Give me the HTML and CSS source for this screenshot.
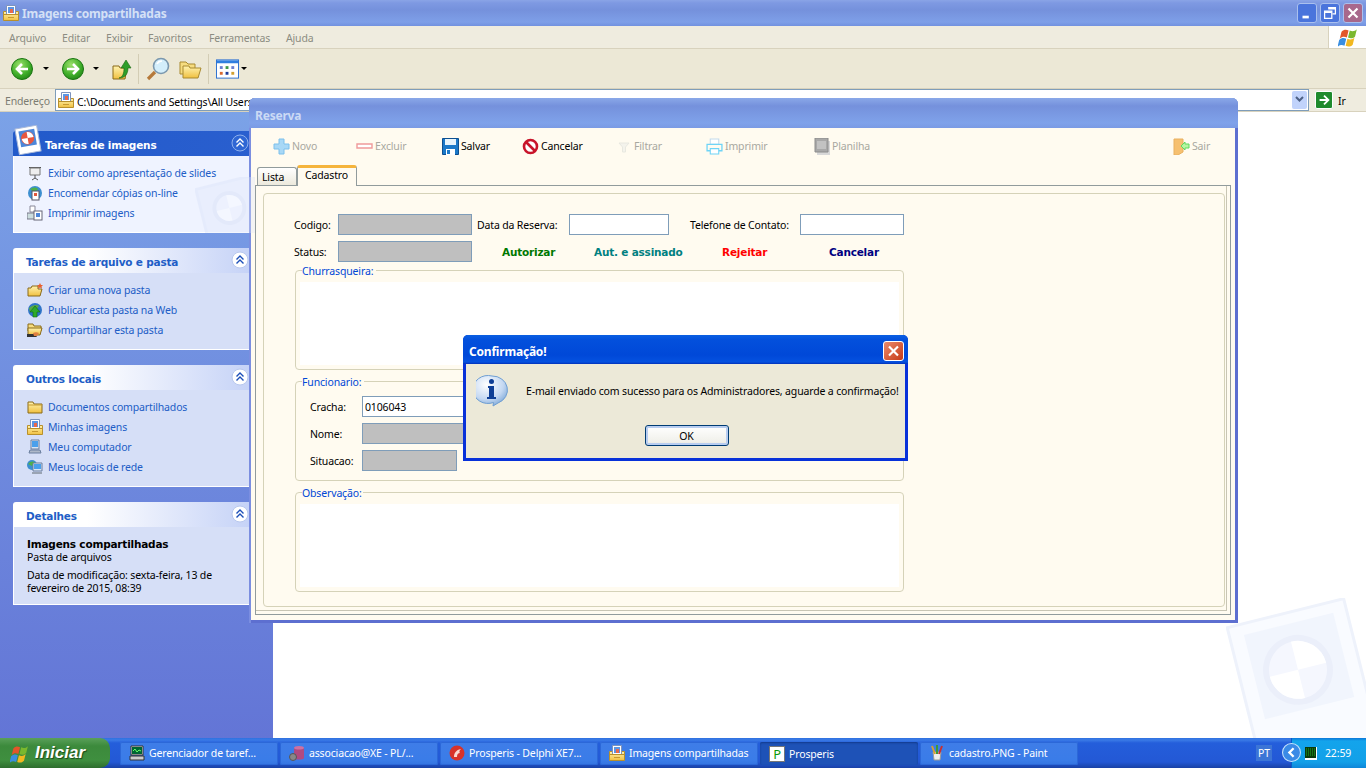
FILE: index.html
```html
<!DOCTYPE html>
<html lang="pt">
<head>
<meta charset="utf-8">
<title>Imagens compartilhadas</title>
<link rel="stylesheet" href="styles.css">
</head>
<body>
<svg class="defs" width="0" height="0">
  <defs>
    <linearGradient id="gFolder" x1="0" y1="0" x2="0" y2="1"><stop offset="0" stop-color="#fff3b0"/><stop offset="1" stop-color="#f0c040"/></linearGradient>
    <radialGradient id="gGreen" cx=".4" cy=".3" r=".8"><stop offset="0" stop-color="#9be06a"/><stop offset=".6" stop-color="#3fae2a"/><stop offset="1" stop-color="#1c7c14"/></radialGradient>
    <radialGradient id="gBall" cx=".4" cy=".3" r=".8"><stop offset="0" stop-color="#ffffff"/><stop offset=".6" stop-color="#c4d8f2"/><stop offset="1" stop-color="#6f9ed2"/></radialGradient>
    <symbol id="i-picfolder" viewBox="0 0 16 16">
      <path d="M.5 6.500h15v9H.5z" fill="url(#gFolder)" stroke="#b8902c"/>
      <path d="M3.500 .5h9v9h-9z" fill="#fff" stroke="#7d93bd"/>
      <path d="M5 2h6v6H5z" fill="#5c96e4"/>
      <path d="M7 4h3v4H7z" fill="#e8694c"/>
      <path d="M1 9.500h14" stroke="#b8902c" fill="none"/>
      <path d="M5 12.500h6" stroke="#c89a30" fill="none"/>
    </symbol>
    <symbol id="i-back" viewBox="0 0 22 22">
      <circle cx="11" cy="11" r="10.500" fill="url(#gGreen)" stroke="#1a7512"/>
      <path d="M17 11H7M11 6l-5 5 5 5" fill="none" stroke="#fff" stroke-width="2.600"/>
    </symbol>
    <symbol id="i-forward" viewBox="0 0 22 22">
      <circle cx="11" cy="11" r="10.500" fill="url(#gGreen)" stroke="#1a7512"/>
      <path d="M5 11h10M11 6l5 5-5 5" fill="none" stroke="#fff" stroke-width="2.600"/>
    </symbol>
    <symbol id="i-up" viewBox="0 0 20 22">
      <path d="M1 8h6l1 2h7l-2 11H1z" fill="url(#gFolder)" stroke="#8a6a18"/>
      <path d="M7 20c4-1 5-5 5-10H9l5-8 5 8h-3c0 6-3 10-9 10z" fill="#2e9e2a" stroke="#17660f" stroke-width=".6"/>
    </symbol>
    <symbol id="i-search" viewBox="0 0 24 24">
      <path d="M9 15l-7 7" stroke="#b5793a" stroke-width="3.200" fill="none"/>
      <circle cx="15" cy="9" r="7.500" fill="#d3eefb" stroke="#7b98ae" stroke-width="1.600"/>
      <path d="M11 7c1-2 3-3 5-3" stroke="#fff" stroke-width="1.600" fill="none"/>
    </symbol>
    <symbol id="i-folders" viewBox="0 0 23 20">
      <path d="M1 3h6l2 2h7v10H1z" fill="#f6dc80" stroke="#a98a30"/>
      <path d="M4 7h6l1 2h11l-3 10H4z" fill="url(#gFolder)" stroke="#a98a30"/>
    </symbol>
    <symbol id="i-views" viewBox="0 0 24 20">
      <rect x=".5" y=".5" width="23" height="19" fill="#fff" stroke="#2a6fd0"/>
      <rect x="1" y="1" width="22" height="3" fill="#2f7fe0"/>
      <path d="M4 7h3v3H4z" fill="#6a7fd0"/><path d="M10 7h3v3h-3z" fill="#3f9a4a"/><path d="M16 7h3v3h-3z" fill="#6a7fd0"/>
      <path d="M4 13h3v3H4z" fill="#d86a30"/><path d="M10 13h3v3h-3z" fill="#1c3c9a"/><path d="M16 13h3v3h-3z" fill="#d0a030"/>
    </symbol>
    <symbol id="i-chev" viewBox="0 0 18 18">
      <circle cx="9" cy="9" r="8" fill="#fff" stroke="#b8c8ee"/>
      <path d="M5.500 8.500L9 5l3.500 3.500M5.500 12.500L9 9l3.500 3.500" fill="none" stroke="#1c4fb8" stroke-width="1.400"/>
    </symbol>
    <symbol id="i-chev-dark" viewBox="0 0 18 18">
      <circle cx="9" cy="9" r="8" fill="#2f66d4" stroke="#8fb0ec"/>
      <path d="M5.500 8.500L9 5l3.500 3.500M5.500 12.500L9 9l3.500 3.500" fill="none" stroke="#fff" stroke-width="1.400"/>
    </symbol>
    <symbol id="i-flag" viewBox="0 2 17 17">
      <path d="M3 6c2-2 4-2 6-1l-1.500 6c-2-1-4-1-6 1z" fill="#e2552a"/>
      <path d="M10 5c2 1 4 1 6-1l-1.500 6c-2 2-4 2-6 1z" fill="#7ab82e"/>
      <path d="M1 13c2-2 4-2 6-1l-1.500 6c-2-1-4-1-6 1z" fill="#3a8ee0"/>
      <path d="M8 12c2 1 4 1 6-1l-1.500 6c-2 2-4 2-6 1z" fill="#f2b820"/>
    </symbol>
    <symbol id="i-print" viewBox="0 0 16 16">
      <path d="M4 1h8v5H4z" fill="#fff" stroke="#c4dcec"/>
      <path d="M1 6h14v6H1z" fill="#fffbf0" stroke="#6fd4f6" stroke-width="1.200"/>
      <path d="M4 10h8v5H4z" fill="#fff" stroke="#6fd4f6"/>
    </symbol>
    <symbol id="i-watermark" viewBox="0 0 140 140">
      <g transform="rotate(-14 0 29)">
        <rect x="1" y="30" width="120" height="150" fill="#f9fbff" stroke="#eef2fb" stroke-width="3"/>
        <rect x="15.500" y="41" width="92" height="87" fill="#f1f5fd"/>
        <circle cx="59.500" cy="88" r="35" fill="#ebeffa"/>
        <circle cx="59.500" cy="88" r="29" fill="#f5f7fe"/>
        <path d="M59.500 59a29 29 0 0 1 29 29h-29zM59.500 88h-29a29 29 0 0 0 29 29z" fill="#fff"/>
      </g>
    </symbol>
  </defs>
</svg>

<div class="desktop">
  <!-- Explorer window -->
  <div class="explorer">
    <div class="titlebar">
      <svg class="ic16"><use href="#i-picfolder"/></svg>
      <span class="title-text">Imagens compartilhadas</span>
      <div class="caption-btns">
        <span class="capbtn"><svg viewBox="0 0 20 20"><path d="M5 13h7v3H5z" fill="#fff"/></svg></span>
        <span class="capbtn"><svg viewBox="0 0 20 20"><path d="M8 4h8v7h-3M4 8h8v8H4z" fill="none" stroke="#fff" stroke-width="1.400"/><path d="M8 4h8v2H8zM4 8h8v2H4z" fill="#fff"/></svg></span>
        <span class="capbtn capbtn-close"><svg viewBox="0 0 20 20"><path d="M5 5l10 10M15 5L5 15" stroke="#fff" stroke-width="2.400"/></svg></span>
      </div>
    </div>
    <div class="menubar">
      <ul class="menu">
        <li>Arquivo</li><li>Editar</li><li>Exibir</li><li>Favoritos</li><li>Ferramentas</li><li>Ajuda</li>
      </ul>
      <div class="menu-logo"><svg class="ic-flag"><use href="#i-flag"/></svg></div>
    </div>
    <div class="toolbar">
      <svg class="ic22"><use href="#i-back"/></svg>
      <span class="caret"></span>
      <svg class="ic22"><use href="#i-forward"/></svg>
      <span class="caret"></span>
      <svg class="ic-up"><use href="#i-up"/></svg>
      <span class="tsep"></span>
      <svg class="ic-search"><use href="#i-search"/></svg>
      <svg class="ic-folders"><use href="#i-folders"/></svg>
      <span class="tsep"></span>
      <svg class="ic-views"><use href="#i-views"/></svg>
      <span class="caret"></span>
    </div>
    <div class="addressbar">
      <span class="addr-label">Endereço</span>
      <div class="addr-box">
        <svg class="ic16"><use href="#i-picfolder"/></svg>
        <span class="addr-text">C:\Documents and Settings\All Users\Documentos\Imagens</span>
        <span class="addr-drop"><svg viewBox="0 0 15 17"><path d="M4 6l3.500 3.500L11 6" fill="none" stroke="#4d6185" stroke-width="2"/></svg></span>
      </div>
      <span class="go-btn"><svg viewBox="0 0 18 18"><path d="M4 9h9M9 4l5 5-5 5" fill="none" stroke="#fff" stroke-width="2"/></svg></span>
      <span class="go-text">Ir</span>
    </div>
    <div class="content">
      <aside class="sidebar">
        <section class="panel panel-primary">
          <svg class="panel-logo" viewBox="0 0 28 31"><g transform="rotate(-10 14 15)"><rect x="3" y="2" width="22" height="26" fill="#fff" stroke="#a8b8d8"/><rect x="6" y="5" width="16" height="16" fill="#4d86d8"/><circle cx="14" cy="13" r="6.500" fill="#e8573f"/><path d="M14 7a6 6 0 0 1 6 6h-6zM14 13H8a6 6 0 0 0 6 6z" fill="#fff"/></g></svg>
          <svg class="panel-watermark" viewBox="0 0 60 56"><g transform="rotate(-14 30 30)"><rect x="6" y="6" width="60" height="66" fill="#dfe7fb" stroke="#d5dff7" stroke-width="3"/><circle cx="34" cy="32" r="17" fill="#cfd9f3"/><circle cx="34" cy="32" r="13" fill="#eaf0fd"/><path d="M34 19a13 13 0 0 1 13 13H34zM34 32H21a13 13 0 0 0 13 13z" fill="#fff"/></g></svg>
          <header class="panel-head"><h2>Tarefas de imagens</h2><svg class="chev"><use href="#i-chev-dark"/></svg></header>
          <div class="panel-body">
            <a class="task"><svg class="ic16" viewBox="0 0 16 16"><path d="M2 2h12v1H2z" fill="#555"/><path d="M3 3h10v7H3z" fill="#eee" stroke="#777"/><path d="M8 10v3M5 15l3-2 3 2" stroke="#555" fill="none"/></svg><span>Exibir como apresentação de slides</span></a>
            <a class="task"><svg class="ic16" viewBox="0 0 16 16"><circle cx="8" cy="8" r="7" fill="#3c8fd0"/><path d="M3 4c3-2 6-2 8 0L8 8z" fill="#4fb04a"/><rect x="5" y="6" width="7" height="9" fill="#fff" stroke="#556"/><rect x="7" y="8" width="3" height="3" fill="#e2563c"/></svg><span>Encomendar cópias on-line</span></a>
            <a class="task"><svg class="ic16" viewBox="0 0 16 16"><path d="M3 1h5v6H3z" fill="#fff" stroke="#889"/><path d="M0 8h9v6H0z" fill="#cdd" stroke="#778"/><rect x="7" y="6" width="8" height="9" fill="#fff" stroke="#667"/><rect x="9" y="8" width="4" height="4" fill="#4d86d8"/></svg><span>Imprimir imagens</span></a>
          </div>
        </section>
        <section class="panel">
          <header class="panel-head"><h2>Tarefas de arquivo e pasta</h2><svg class="chev"><use href="#i-chev"/></svg></header>
          <div class="panel-body">
            <a class="task"><svg class="ic16" viewBox="0 0 16 16"><path d="M1 6h3l1-2h6v3h4l-2 7H1z" fill="url(#gFolder)" stroke="#8a6a18"/><path d="M13 1l1 2 2 0-1.500 1.500.5 2-2-1-2 1 .5-2L10 3l2 0z" fill="#e8602c"/></svg><span>Criar uma nova pasta</span></a>
            <a class="task"><svg class="ic16" viewBox="0 0 16 16"><circle cx="8" cy="8" r="7" fill="#2f74c8"/><path d="M2 6c3-3 8-4 10-2l-3 4-6 2z" fill="#57a848"/><path d="M8 4l5 6h-3v5H6v-5H3z" fill="#2eaa2a" stroke="#0e6a10" stroke-width=".6"/></svg><span>Publicar esta pasta na Web</span></a>
            <a class="task"><svg class="ic16" viewBox="0 0 16 16"><path d="M1 2h5l1 2h7v5H1z" fill="#f6dc80" stroke="#8a6a18"/><path d="M1 6h14l-2 7H1z" fill="url(#gFolder)" stroke="#8a6a18"/><path d="M0 12h8l2 3H0z" fill="#333"/><path d="M6 11c2-1 4-1 6 0l-2 3H7z" fill="#e08040"/></svg><span>Compartilhar esta pasta</span></a>
          </div>
        </section>
        <section class="panel">
          <header class="panel-head"><h2>Outros locais</h2><svg class="chev"><use href="#i-chev"/></svg></header>
          <div class="panel-body">
            <a class="task"><svg class="ic16" viewBox="0 0 16 16"><path d="M1 3h5l1 2h8v9H1z" fill="url(#gFolder)" stroke="#8a6a18"/><path d="M1 6h14" stroke="#c49a30"/></svg><span>Documentos compartilhados</span></a>
            <a class="task"><svg class="ic16"><use href="#i-picfolder"/></svg><span>Minhas imagens</span></a>
            <a class="task"><svg class="ic16" viewBox="0 0 16 16"><path d="M4 1h8v9H4z" fill="#d8e4f4" stroke="#6a7f9f"/><path d="M5 2h6v6H5z" fill="#4aa0ec"/><path d="M3 11h10l1 3H2z" fill="#aeb8c8" stroke="#6a7f9f"/></svg><span>Meu computador</span></a>
            <a class="task"><svg class="ic16" viewBox="0 0 16 16"><circle cx="5" cy="6" r="5" fill="#3c8fd0"/><path d="M1 5c2-3 5-3 7-2L5 7z" fill="#4fb04a"/><path d="M6 4h9v8H6z" fill="#d8e4f4" stroke="#6a7f9f"/><path d="M7 5h7v5H7z" fill="#4aa0ec"/><path d="M5 13h10v2H5z" fill="#9aa4b4"/></svg><span>Meus locais de rede</span></a>
          </div>
        </section>
        <section class="panel">
          <header class="panel-head"><h2>Detalhes</h2><svg class="chev"><use href="#i-chev"/></svg></header>
          <div class="panel-body details">
            <strong>Imagens compartilhadas</strong>
            <span>Pasta de arquivos</span>
            <p>Data de modificação: sexta-feira, 13 de<br>fevereiro de 2015, 08:39</p>
          </div>
        </section>
      </aside>
      <main class="listing"><svg class="main-watermark"><use href="#i-watermark"/></svg></main>
    </div>
  </div>

  <!-- Reserva window -->
  <div class="reserva">
    <div class="res-title"><span>Reserva</span></div>
    <div class="res-client">
      <div class="res-tools">
        <span class="tool off"><svg class="ic17" viewBox="0 0 17 17"><path d="M6 1h5v5h5v5h-5v5H6v-5H1V6h5z" fill="#a8d8f6" stroke="#7cc0ec"/></svg>Novo</span>
        <span class="tool off"><svg class="ic17" viewBox="0 0 17 17"><path d="M1 6h15v4H1z" fill="#fff" stroke="#f09a9a" stroke-width="1.400"/></svg>Excluir</span>
        <span class="tool"><svg class="ic17" viewBox="0 0 17 17"><path d="M.5.5h16v16H.5z" fill="#1b78c8" stroke="#0d4f90"/><path d="M3 1h11v6H3z" fill="#e8f4fc"/><path d="M4 11h9v6H4z" fill="#fff"/><path d="M5 12h3v4H5z" fill="#1b78c8"/></svg>Salvar</span>
        <span class="tool"><svg class="ic17" viewBox="0 0 17 17"><circle cx="8.500" cy="8.500" r="6.500" fill="#fff" stroke="#c8142a" stroke-width="2.600"/><path d="M4 4l9 9" stroke="#c8142a" stroke-width="2.600"/></svg>Cancelar</span>
        <span class="tool off tool-filter"><svg class="ic12" viewBox="0 0 12 12"><path d="M1 2h10L7.500 6v5h-3V6z" fill="#f4f3ec" stroke="#e8e8e0"/></svg>Filtrar</span>
        <span class="tool off"><svg class="ic17"><use href="#i-print"/></svg>Imprimir</span>
        <span class="tool off tool-sheet"><svg class="ic17" viewBox="0 0 17 17"><path d="M3 3h13v14H3z" fill="#d8d8d8"/><path d="M1 0h13v14H1z" fill="#a8a8a8" stroke="#8c8c8c"/><path d="M3 4h9M3 6h9M3 8h9M3 10h9" stroke="#dcdcdc"/></svg>Planilha</span>
        <span class="tool off"><svg class="ic17" viewBox="0 0 17 17"><path d="M1 1h9v13l-5 3H1z" fill="#f6c070" stroke="#e8b060"/><path d="M8 8l4-4v2h4v4h-4v2z" fill="#b6f6a0" stroke="#60d860"/></svg>Sair</span>
      </div>
      <div class="tabs">
        <span class="tab">Lista</span>
        <span class="tab tab-active">Cadastro</span>
      </div>
      <div class="tab-page">
        <div class="bevel">
          <div class="form-row">
            <label class="lbl-code">Codigo:</label><span class="field ro w-code"></span>
            <label class="lbl-date">Data da Reserva:</label><span class="field w-date"></span>
            <label class="lbl-phone">Telefone de Contato:</label><span class="field w-phone"></span>
          </div>
          <div class="form-row">
            <label class="lbl-code">Status:</label><span class="field ro w-code"></span>
            <b class="action act-auth">Autorizar</b>
            <b class="action act-signed">Aut. e assinado</b>
            <b class="action act-reject">Rejeitar</b>
            <b class="action act-cancel">Cancelar</b>
          </div>
          <div class="group group-first"><span class="legend">Churrasqueira:</span><div class="group-fill"></div></div>
          <div class="group group-staff">
            <span class="legend">Funcionario:</span>
            <div class="staff-row"><label>Cracha:</label><span class="field field-value w-staff">0106043</span></div>
            <div class="staff-row"><label>Nome:</label><span class="field ro w-staff"></span></div>
            <div class="staff-row"><label>Situacao:</label><span class="field ro w-state"></span></div>
          </div>
          <div class="group"><span class="legend legend-tight">Observação:</span><div class="group-fill"></div></div>
        </div>
      </div>
    </div>
  </div>

  <!-- Dialog -->
  <div class="dialog">
    <div class="dlg-title">
      <span class="dlg-caption">Confirmação!</span>
      <span class="dlg-close"><svg viewBox="0 0 21 20"><path d="M5.500 5l10 10M15.500 5l-10 10" stroke="#fff" stroke-width="2.400"/></svg></span>
    </div>
    <div class="dlg-body">
      <div class="dlg-msg">
        <svg class="ic-info" viewBox="0 0 32 33"><path d="M16 1a15 14 0 0 1 6 27l-5 3 .5-3.500A15 14 0 1 1 16 1z" fill="url(#gBall)" stroke="#6f9ed2"/><circle cx="15.500" cy="6.500" r="2.500" fill="#0f3f96"/><path d="M12 11h6v11h2v2h-9v-2h2v-9h-1z" fill="#0f3f96"/></svg>
        <p>E-mail enviado com sucesso para os Administradores, aguarde a confirmação!</p>
      </div>
      <div class="dlg-actions"><button class="ok" type="button">OK</button></div>
    </div>
  </div>

  <!-- Taskbar -->
  <footer class="taskbar">
    <div class="start"><svg class="ic-start"><use href="#i-flag"/></svg><span>Iniciar</span></div>
    <div class="tasks">
      <div class="task-btn"><svg class="ic16" viewBox="0 0 16 16"><path d="M2 1h12v9H2z" fill="#ddd" stroke="#333"/><path d="M3 2h10v7H3z" fill="#063"/><path d="M4 6l2-2 2 3 2-2 2 1" stroke="#6f6" fill="none"/><path d="M1 11h14v4H1z" fill="#ccc" stroke="#333"/></svg><span>Gerenciador de taref...</span></div>
      <div class="task-btn"><svg class="ic16" viewBox="0 0 16 16"><ellipse cx="10" cy="3" rx="5" ry="2" fill="#d070a0"/><path d="M5 3v10c0 2 10 2 10 0V3c0 2-10 2-10 0z" fill="#b04a80"/><circle cx="4" cy="12" r="3.500" fill="#888" stroke="#555"/></svg><span>associacao@XE - PL/...</span></div>
      <div class="task-btn"><svg class="ic16" viewBox="0 0 16 16"><circle cx="8" cy="8" r="7.500" fill="#d8322a"/><path d="M5 12c0-4 2-7 7-8-2 2-2 3-1 4-2 0-3 1-3 4z" fill="#fbd8d0"/></svg><span>Prosperis - Delphi XE7...</span></div>
      <div class="task-btn"><svg class="ic16"><use href="#i-picfolder"/></svg><span>Imagens compartilhadas</span></div>
      <div class="task-btn task-current"><span class="p-logo">P</span><span>Prosperis</span></div>
      <div class="task-btn"><svg class="ic16" viewBox="0 0 16 16"><path d="M4 7h8l-1 8H5z" fill="#eee" stroke="#999"/><path d="M3 1l3 8" stroke="#d8a030" stroke-width="2"/><path d="M8 0v9" stroke="#3a9a3a" stroke-width="2"/><path d="M13 1l-3 8" stroke="#c83030" stroke-width="2"/></svg><span>cadastro.PNG - Paint</span></div>
    </div>
    <span class="lang">PT</span>
    <span class="tray-arrow"><svg viewBox="0 0 18 18"><circle cx="9" cy="9" r="8.500" fill="#3a8ae6" stroke="#c8e4fc"/><path d="M11 5L7 9l4 4" fill="none" stroke="#fff" stroke-width="2.200"/></svg></span>
    <div class="tray">
      <svg class="ic-mon" viewBox="0 0 12 13"><path d="M0 0h12v13H0z" fill="#fff"/><path d="M0 0h11v11H0z" fill="#0a3a0a"/><path d="M1 2h9M1 4h9M1 6h9M1 8h9" stroke="#23b023" stroke-dasharray="1 1"/></svg>
      <span class="clock">22:59</span>
    </div>
  </footer>
</div>
</body>
</html>
```

FILE: styles.css
```css
* { box-sizing: border-box; }
html, body { margin: 0; padding: 0; width: 1366px; height: 768px; overflow: hidden; }
body { font: 10.5px/13px "Noto Sans", Tahoma, sans-serif; letter-spacing: -.15px; color: #000; background: #fff; }
.defs { position: absolute; }
svg { display: block; flex: none; }
h2, p, ul { margin: 0; padding: 0; }

.ic16 { width: 16px; height: 16px; }
.ic17 { width: 17px; height: 17px; }
.ic12 { width: 12px; height: 12px; }
.ic22 { width: 22px; height: 22px; }

.desktop { position: relative; width: 1366px; height: 768px; overflow: hidden; display: flex; flex-direction: column; }

/* Explorer */
.explorer { height: 738px; display: flex; flex-direction: column; }
.titlebar {
  height: 26px; display: flex; align-items: center; padding: 0 3px 0 3px; gap: 3px;
  background: linear-gradient(180deg, #8aa4e6 0, #7e99e2 3px, #7591dc 10px, #7e9fe8 22px, #7291df 26px);
}
.title-text { font: bold 12px/14px "Noto Sans", sans-serif; letter-spacing: -.2px; color: #d4e0f6; padding-top: 1px; }
.caption-btns { margin-left: auto; display: flex; gap: 3px; }
.capbtn { width: 20px; height: 20px; border: 1px solid #aac0ee; border-radius: 3px; background: #4a74dc; }
.capbtn svg { width: 18px; height: 18px; }
.capbtn-close { background: #a8688c; }
.menubar { height: 23px; display: flex; background: #efecdf; border-bottom: 1px solid #d8d2bd; }
.menu { list-style: none; display: grid; grid-template-columns: 53px 44px 42px 61px 77px auto; padding: 2px 0 0 9px; align-items: center; color: #8c8c82; height: 22px; }
.menu-logo { margin-left: auto; width: 38px; background: #fff; border-left: 1px solid #d8d2bd; display: flex; align-items: center; justify-content: center; }
.ic-flag { width: 20px; height: 20px; }
.toolbar {
  height: 40px; display: grid; grid-template-columns: 32px 19px 31px 19px 26px 8px 33px 29px 8px 25px auto;
  align-items: center; padding-left: 11px; background: #ece8d6; border-bottom: 1px solid #d8d2bd;
}
.caret { width: 0; height: 0; border: 3px solid transparent; border-top: 3px solid #000; border-bottom: 0; }
.tsep { width: 1px; height: 30px; background: #d3cdb5; }
.ic-up { width: 20px; height: 22px; }
.ic-search { width: 24px; height: 24px; }
.ic-folders { width: 23px; height: 20px; }
.ic-views { width: 23px; height: 20px; }
.addressbar { height: 23px; display: flex; align-items: center; background: #efecdf; border-bottom: 1px solid #d8d2bd; }
.addr-label { width: 55px; padding: 2px 0 0 5px; color: #7c7c72; }
.addr-box { width: 1254px; height: 22px; display: flex; align-items: center; background: #fff; border: 1px solid #7f9db9; padding: 0 1px 0 2px; gap: 3px; }
.addr-text { white-space: nowrap; padding-top: 5px; }
.addr-drop { margin-left: auto; width: 15px; height: 18px; background: #c1d3fb; border-radius: 2px; }
.go-btn { margin-left: 6px; width: 18px; height: 18px; border-radius: 2px; background: #1f8a2c; border: 1px solid #fff; }
.go-text { margin-left: 5px; padding-top: 2px; }
.content { flex: 1; display: flex; min-height: 0; position: relative; }
.sidebar { width: 273px; padding: 19px 12px 0 13px; background: linear-gradient(180deg, #7ba2e7, #6375d6); overflow: hidden; flex: none; }
.panel { position: relative; width: 248px; margin-bottom: 15px; }
.panel-head {
  height: 25px; display: flex; align-items: center; justify-content: space-between; padding: 0 4px 0 13px; border-radius: 3px 3px 0 0;
  background: linear-gradient(90deg, #fff 30%, #c6d3f7 95%);
}
.panel-head h2 { font: bold 10.5px/13px "DejaVu Sans", sans-serif; letter-spacing: -.2px; color: #215dc6; padding-top: 3px; }
.chev { width: 18px; height: 18px; margin: 0 8px 2px 0; }
.panel-body { padding: 7px 0 9px 13px; background: #d6dff7; border: 1px solid #fff; border-width: 0 0 1px 1px; }
.task { display: flex; align-items: center; height: 20px; gap: 5px; color: #215dc6; }
.panel-primary .panel-head { padding-left: 32px; background: linear-gradient(90deg, #225aca, #2a5fcf); }
.panel-primary .panel-head h2 { color: #fff; }
.panel-primary .panel-body { background: #eff3ff; }
.panel-logo { position: absolute; left: 1px; top: -6px; width: 28px; height: 31px; z-index: 1; }
.panel-watermark { position: absolute; left: 182px; top: 46px; width: 60px; height: 56px; z-index: 1; opacity: .35; overflow: hidden; }
.details { padding: 11px 10px 9px 13px; color: #000; display: flex; flex-direction: column; }
.details strong { font: bold 10.5px/13px "DejaVu Sans", sans-serif; letter-spacing: -.2px; }
.details p { margin-top: 5px; }
.listing { flex: 1; position: relative; background: #fff; }
.main-watermark { position: absolute; right: 0; bottom: 0; width: 140px; height: 140px; }

/* Reserva window */
.reserva {
  position: absolute; left: 249px; top: 98px; width: 989px; height: 525px; display: flex; flex-direction: column;
  background: #5d6fd0; border-radius: 6px 6px 0 0; box-shadow: inset 0 1px 0 #86a6dd, inset 2px 0 0 #7b8ee0;
}
.res-title {
  height: 30px; padding: 10px 6px 0; border-radius: 6px 6px 0 0; flex: none;
  font: bold 12px/15px "Noto Sans", sans-serif; letter-spacing: -.2px; color: #cbdaf5;
  background: linear-gradient(180deg, #8aa8e8 0, #7591dc 8px, #7fa2ea 25px, #7a9ae4 30px);
}
.res-client { margin: 0 3px 3px 2px; flex: 1; min-height: 0; background: #fffbf0; display: flex; flex-direction: column; }
.res-tools {
  height: 37px; display: grid; grid-template-columns: 83px 86px 80px 96px 88px 108px 359px auto; align-items: center; padding-left: 22px; flex: none;
}
.tool { display: flex; align-items: center; gap: 2px; color: #000; }
.tool.off { color: #a8a8a0; }
.tool-filter { gap: 4px; }
.tool-sheet { gap: 1px; }
.tabs { height: 20px; display: flex; align-items: flex-end; padding-left: 6px; position: relative; z-index: 1; flex: none; }
.tab { width: 40px; height: 18px; padding: 3px 0 0 4px; border: 1px solid #919b9c; border-bottom: 0; border-radius: 3px 3px 0 0; background: linear-gradient(180deg, #fff, #ece9dc); }
.tab-active { width: 60px; height: 21px; padding: 1px 0 0 7px; border-top: 3px solid #f5b43c; background: #fffbf0; margin-bottom: -1px; }
.tab-page { margin: 0 4px 5px 4px; flex: 1; border: 1px solid #919b9c; padding: 7px 5px 7px 7px; display: flex; box-shadow: inset -3px -3px 0 #fffbf0, inset -4px -4px 0 #c8c5b4; }
.bevel { flex: 1; border: 1px solid #d5d2b8; border-radius: 4px; padding: 20px 0 0 30px; display: flex; flex-direction: column; }
.form-row { display: flex; align-items: center; height: 21px; margin-bottom: 6px; }
.form-row label { display: block; padding-top: 2px; }
.lbl-code { width: 44px; }
.lbl-date { width: 92px; margin-left: 5px; }
.lbl-phone { width: 110px; margin-left: 21px; }
.field { display: flex; align-items: center; height: 21px; border: 1px solid #7f9db9; background: #fff; padding-left: 2px; }
.field-value { padding-top: 2px; }
.field.ro { background: #bfbfbf; }
.w-code { width: 134px; }
.w-date { width: 100px; }
.w-phone { width: 104px; }
.w-staff { width: 160px; }
.w-state { width: 95px; }
.action { font: bold 10.5px/13px "DejaVu Sans", sans-serif; letter-spacing: -.2px; white-space: nowrap; padding-top: 2px; }
.act-auth { color: #007800; margin-left: 30px; width: 92px; }
.act-signed { color: #008080; width: 128px; }
.act-reject { color: #ff0000; width: 107px; }
.act-cancel { color: #000080; }
.group { position: relative; width: 609px; height: 100px; margin: 0 0 11px 1px; border: 1px solid #d5d2b8; border-radius: 4px; padding: 11px 4px 4px; display: flex; flex-direction: column; }
.group-first { margin-top: 2px; }
.group-staff { padding: 14px 0 0 14px; }
.group-fill { flex: 1; background: #fff; }
.legend { position: absolute; left: 6px; top: -6px; padding: 0 3px 0 0; color: #0047d6; background: #fffbf0; }
.legend-tight { padding-right: 1px; }
.staff-row { display: flex; align-items: center; height: 21px; margin-bottom: 6px; }
.staff-row label { width: 52px; padding-top: 2px; }

/* Dialog */
.dialog { position: absolute; left: 463px; top: 335px; width: 445px; height: 126px; display: flex; flex-direction: column; border-radius: 5px 5px 0 0; background: #0831d9; z-index: 2; }
.dlg-title {
  height: 29px; flex: none; display: flex; align-items: center; justify-content: space-between; padding: 0 4px 0 6px; border-radius: 5px 5px 0 0;
  font: bold 12px/15px "Noto Sans", sans-serif; letter-spacing: -.2px; color: #fff;
  background: linear-gradient(180deg, #0a5fe2 0, #0350dc 5px, #0048d8 20px, #0552e0 27px, #0231b8 29px);
}
.dlg-caption { padding-top: 3px; }
.dlg-close { width: 21px; height: 20px; margin-top: 2px; border: 1px solid #fff; border-radius: 3px; background: linear-gradient(135deg, #eb8a6c, #c63a17); }
.dlg-close svg { width: 19px; height: 18px; }
.dlg-body { flex: 1; margin: 0 3px 3px; background: #ece9d8; display: flex; flex-direction: column; }
.dlg-msg { display: flex; align-items: flex-start; padding: 11px 0 0 10px; height: 61px; }
.dlg-msg p { margin: 10px 0 0 18px; white-space: nowrap; }
.ic-info { width: 32px; height: 33px; }
.dlg-actions { display: flex; justify-content: center; padding-left: 2px; }
.ok { width: 84px; height: 21px; padding: 2px 0 0; font: inherit; letter-spacing: inherit; color: #000; border: 1px solid #003c74; border-radius: 3px; background: linear-gradient(180deg, #fff, #f0f0ea 85%, #dcdcd0); box-shadow: inset 0 0 0 2px #b8cdf0; }

/* Taskbar */
.taskbar { height: 30px; flex: none; display: flex; align-items: center; position: relative; color: #fff; background: linear-gradient(180deg, #2f71e0 0, #3a7ae6 2px, #245edb 5px, #2358d5 24px, #1941a5 30px); }
.start { width: 110px; height: 30px; display: flex; align-items: center; padding: 0 0 0 10px; gap: 6px; border-radius: 0 10px 10px 0; background: linear-gradient(180deg, #5aa05a 0, #3c8a3c 8px, #3f8f3f 22px, #2d6d2d 30px); font: italic bold 17px/20px "Liberation Sans", sans-serif; letter-spacing: 0; color: #fff; text-shadow: 1px 1px 1px #1a4a1a; }
.ic-start { width: 19px; height: 19px; }
.tasks { margin-left: 10px; display: flex; gap: 2px; }
.task-btn { width: 158px; height: 23px; display: flex; align-items: center; gap: 4px; padding-left: 9px; border-radius: 2px; background: linear-gradient(180deg, #3f7de8, #3a7ce8 80%, #3474e0); box-shadow: inset 0 0 0 1px #2c68d8; color: #fff; white-space: nowrap; }
.task-current { background: #1e52b7; box-shadow: inset 0 1px 2px #123a8c; padding-top: 2px; }
.p-logo { width: 16px; height: 16px; background: #fff; border: 1px solid #777; color: #0a9a0a; font-size: 13px; display: flex; align-items: center; justify-content: center; }
.lang { position: absolute; left: 1256px; top: 7px; width: 16px; height: 16px; background: #3c75d6; text-align: center; line-height: 16px; }
.tray-arrow { position: absolute; left: 1282px; top: 5px; width: 19px; height: 19px; z-index: 1; }
.tray-arrow svg { width: 19px; height: 19px; }
.tray { margin-left: auto; width: 75px; height: 30px; display: flex; align-items: center; padding-left: 13px; gap: 8px; background: linear-gradient(180deg, #0c77d8 0, #13a4ec 3px, #12a0e8 24px, #0f86d8 30px); border-left: 1px solid #095bc9; }
.ic-mon { width: 12px; height: 13px; }
.clock { color: #fff; }
```
